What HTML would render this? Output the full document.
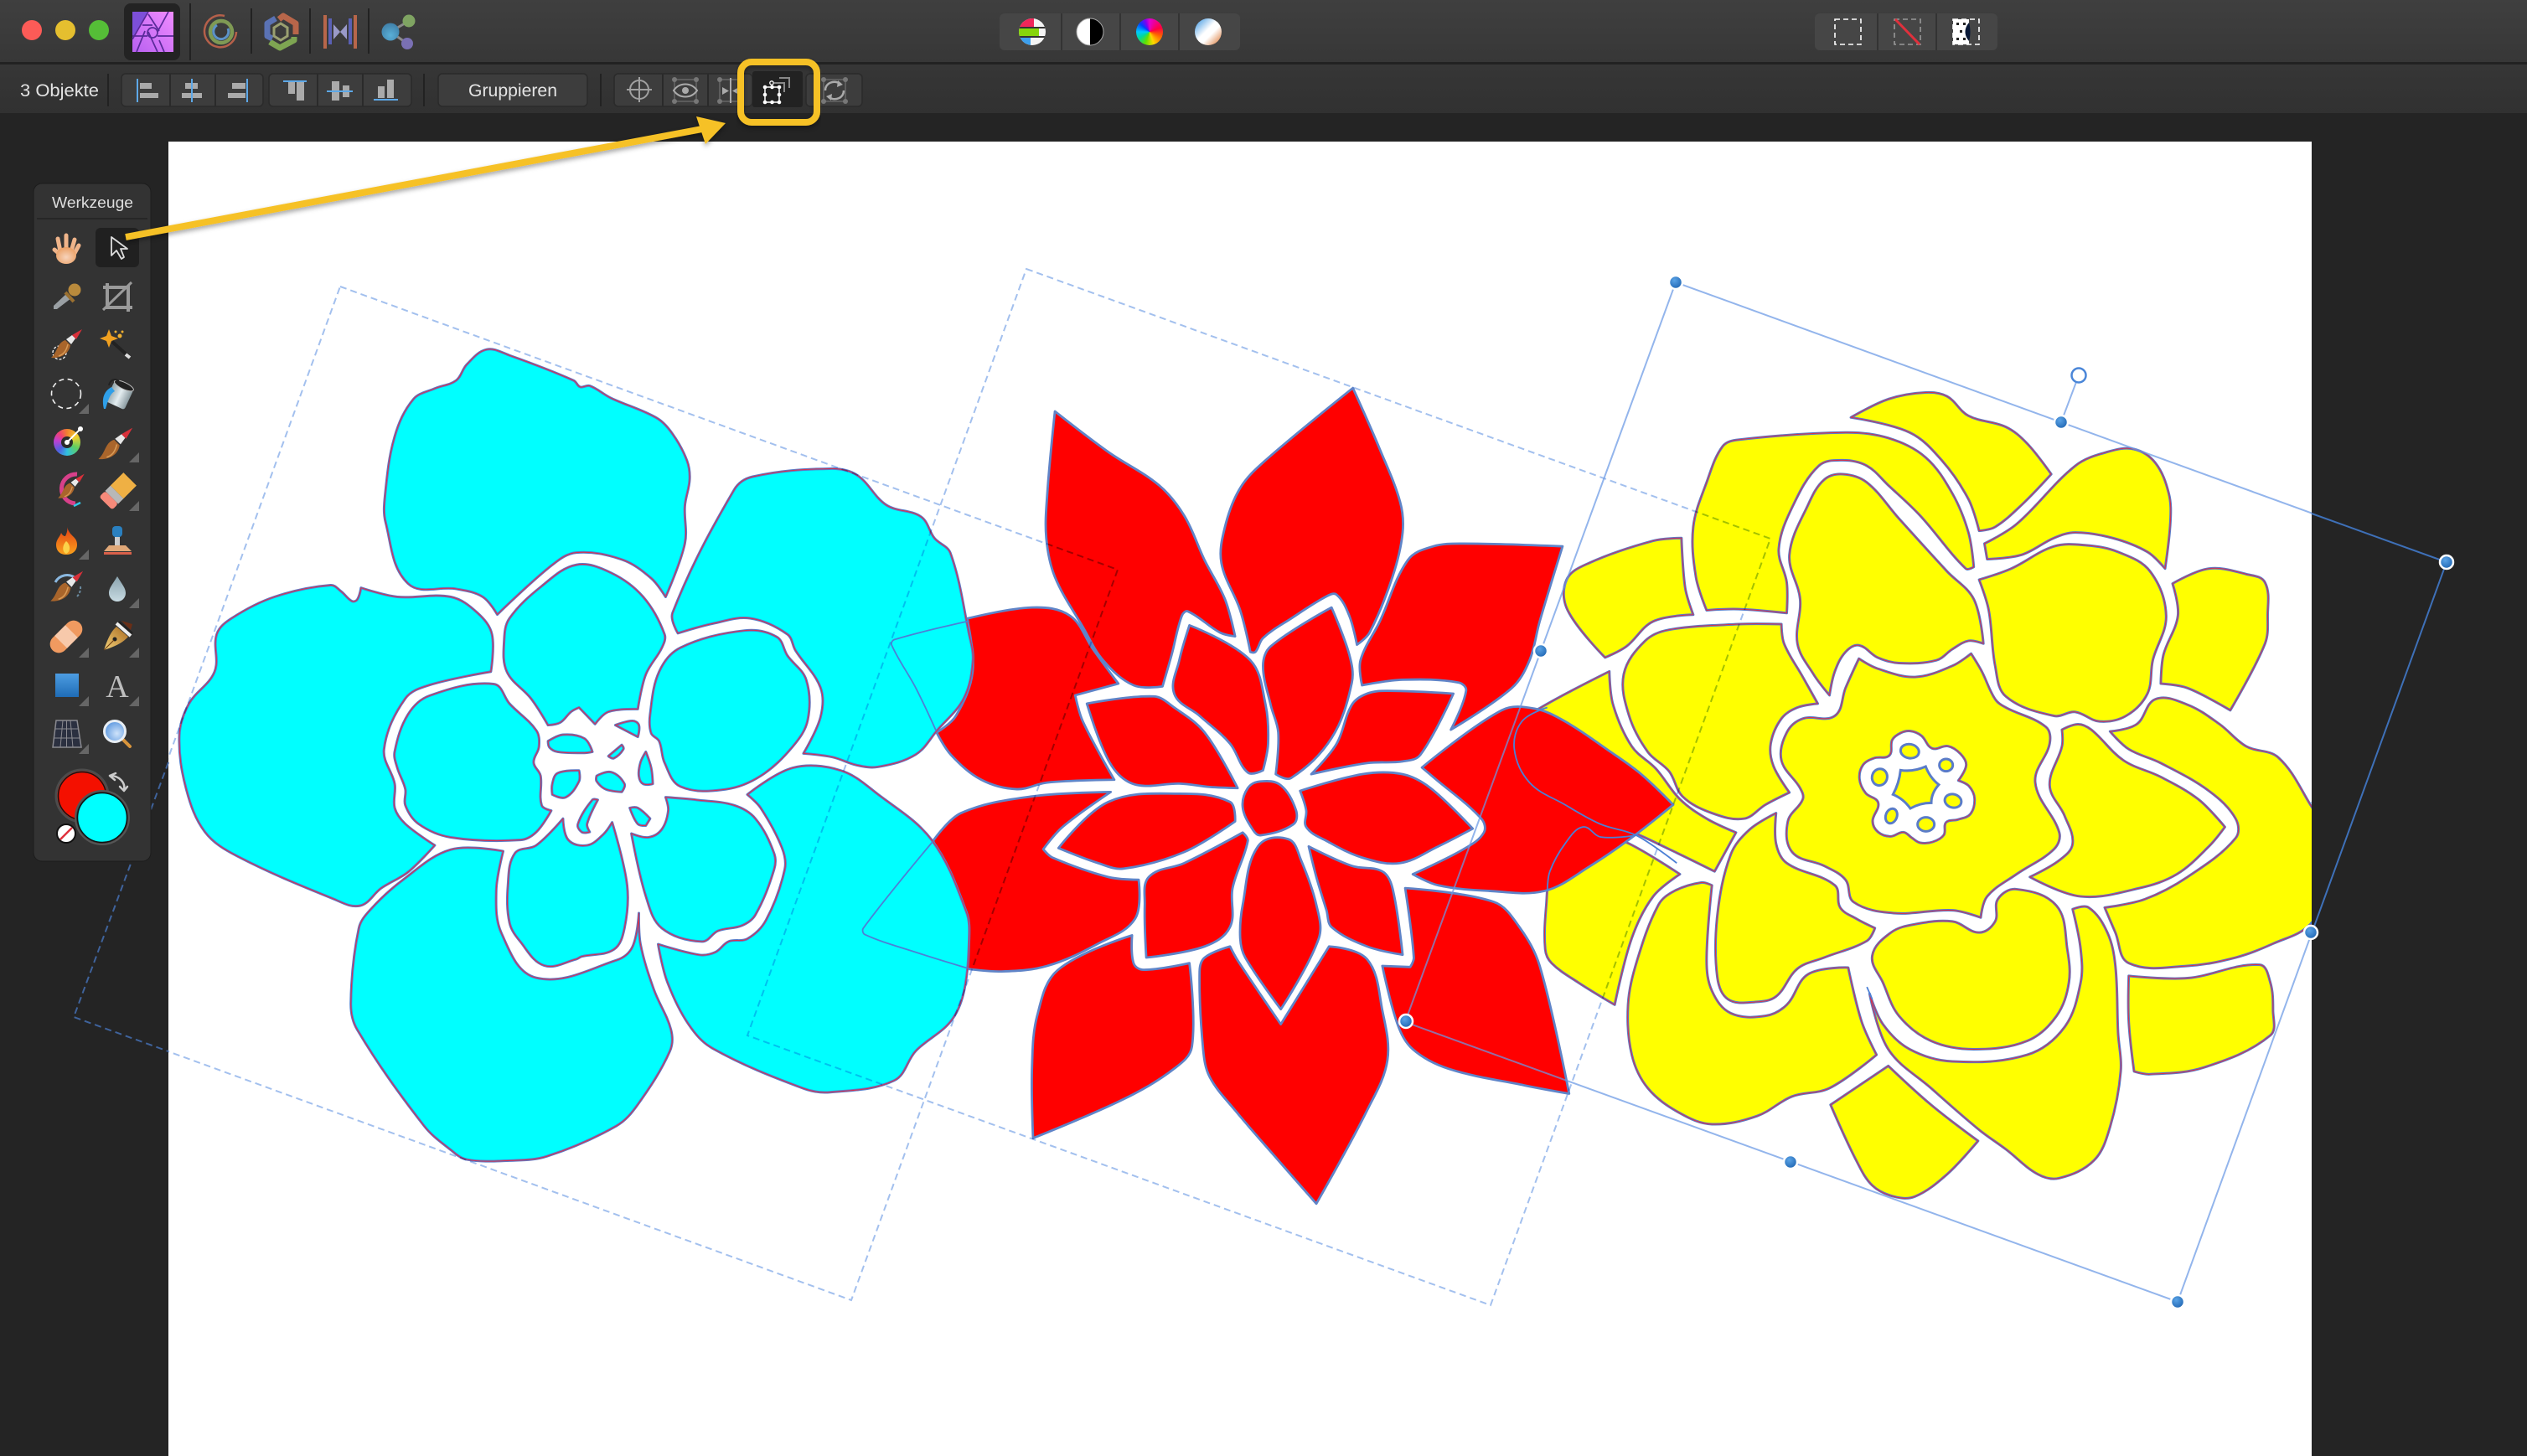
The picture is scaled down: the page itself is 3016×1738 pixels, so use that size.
<!DOCTYPE html>
<html><head><meta charset="utf-8"><style>
html,body{margin:0;padding:0;background:#242424;width:3016px;height:1738px;overflow:hidden}
svg{display:block;position:absolute;left:0;top:0}
text{font-family:"Liberation Sans",sans-serif}
path.s{vector-effect:non-scaling-stroke;stroke-linejoin:round}
.sn{vector-effect:non-scaling-stroke}
</style></head><body>
<svg xmlns="http://www.w3.org/2000/svg" width="3016" height="1738" viewBox="0 0 3016 1738">
<defs>
<linearGradient id="tb" x1="0" y1="0" x2="0" y2="1"><stop offset="0" stop-color="#3f3f3f"/><stop offset="1" stop-color="#373737"/></linearGradient>
<linearGradient id="ob" x1="0" y1="0" x2="0" y2="1"><stop offset="0" stop-color="#363636"/><stop offset="1" stop-color="#313131"/></linearGradient>
<linearGradient id="af" x1="0" y1="1" x2="1" y2="0"><stop offset="0" stop-color="#b860f0"/><stop offset="1" stop-color="#f08cff"/></linearGradient>
<linearGradient id="sq" x1="0" y1="0" x2="0" y2="1"><stop offset="0" stop-color="#4d9de2"/><stop offset="1" stop-color="#1f6cb6"/></linearGradient>
<linearGradient id="gr4" x1="0" y1="0" x2="1" y2="1"><stop offset="0" stop-color="#2f8fe0"/><stop offset=".45" stop-color="#fff"/><stop offset=".6" stop-color="#fff"/><stop offset="1" stop-color="#d9702a"/></linearGradient>
<linearGradient id="sil" x1="0" y1="0" x2="1" y2="0"><stop offset="0" stop-color="#8fa3aa"/><stop offset=".5" stop-color="#e4edf0"/><stop offset="1" stop-color="#8a9aa0"/></linearGradient>
<linearGradient id="drop" x1="0" y1="0" x2="0" y2="1"><stop offset="0" stop-color="#8aa3ae"/><stop offset="1" stop-color="#c8dbe2"/></linearGradient>
<linearGradient id="nib" x1="0" y1="1" x2="1" y2="0"><stop offset="0" stop-color="#f3d27a"/><stop offset="1" stop-color="#a8691f"/></linearGradient>
<linearGradient id="fl" x1="0" y1="0" x2="0" y2="1"><stop offset="0" stop-color="#e23c14"/><stop offset="1" stop-color="#f9a21c"/></linearGradient>
<radialGradient id="hd" cx=".5" cy=".6" r=".6"><stop offset="0" stop-color="#f7d3bb"/><stop offset="1" stop-color="#ea9f63"/></radialGradient>
<radialGradient id="hn" cx=".4" cy=".35" r=".7"><stop offset="0" stop-color="#5aa3e6"/><stop offset="1" stop-color="#1d63b0"/></radialGradient>
<radialGradient id="lens" cx=".6" cy=".6" r=".7"><stop offset="0" stop-color="#cfe3fa"/><stop offset="1" stop-color="#4f8fdc"/></radialGradient>
<radialGradient id="blu" cx=".5" cy=".7" r=".7"><stop offset="0" stop-color="#5ab0d8"/><stop offset="1" stop-color="#3f7fa8"/></radialGradient>
<filter id="sh" x="-5%" y="-30%" width="110%" height="170%"><feDropShadow dx="0" dy="3" stdDeviation="3" flood-color="#000" flood-opacity=".35"/></filter>
<clipPath id="page"><rect x="201" y="169" width="2558" height="1569"/></clipPath>
<clipPath id="c1"><circle cx="1232" cy="38" r="16"/></clipPath>
<g id="brush">
<path d="M-15,10 C-6,11 6,7 8,-5 L2,-11 C-8,-8 -7,3 -15,10Z" fill="#a9652b"/>
<path d="M-6,8 C0,6 3,2 5,-6" stroke="#d89a56" stroke-width="1.5" fill="none"/>
<path d="M3,-12 L10,-17 L14,-13 L9,-6Z" fill="#e8e8e8"/>
<path d="M10,-17 L22,-24 L15,-12Z" fill="#d9303a"/>
</g>
<g id="cyp">
<path class="s" d="M597,27 640,38 760,85 772,97 790,95 830,118 915,155 945,185 972,235 977,270 968,320 968,390 932,490 905,455 850,420 765,407 720,430 617,523 590,490 540,475 450,465 408,350 407,300 425,190 460,120 500,100 540,85 560,55Z"/>
<path class="s" d="M945,520 1060,290 1095,265 1240,250 1290,262 1345,318 1410,340 1435,380 1465,408 1500,560 1507,610 1490,680 1440,740 1400,785 1330,808 1290,805 1245,790 1190,783 1222,715 1222,660 1175,590 1160,560 1090,530 1020,540 955,558Z"/>
<path class="s" d="M1085,860 1170,810 1260,815 1330,860 1430,945 1495,1080 1500,1130 1490,1230 1465,1285 1400,1340 1360,1395 1240,1417 1190,1410 1020,1335 975,1290 935,1210 918,1140 995,1160 1025,1155 1050,1135 1085,1130 1120,1095 1155,1000 1150,960 1110,885Z"/>
<path class="s" d="M530,963 628,966 615,1040 625,1120 690,1203 840,1170 870,1145 882,1082 885,1140 910,1225 942,1300 940,1340 880,1440 840,1480 710,1537 640,1545 560,1543 530,1525 480,1480 355,1300 343,1250 358,1110 380,1075 440,1020Z"/>
<path class="s" d="M305,468 325,480 345,498 355,495 362,473 430,490 530,490 580,520 607,560 605,630 490,655 445,680 405,775 425,840 425,885 445,915 500,955 450,1005 400,1035 360,1068 310,1055 130,975 70,930 35,850 22,750 40,690 88,630 92,560 120,530 200,490Z"/>
<path class="s" d="M765,430 830,445 890,490 930,560 925,585 895,635 880,700 825,705 800,728 770,697 755,705 735,725 712,730 680,680 635,630 630,570 640,530 700,470Z"/>
<path class="s" d="M1080,553 1140,565 1160,600 1195,645 1198,720 1170,770 1110,825 1045,850 960,845 930,800 920,760 905,745 903,710 920,630 960,585Z"/>
<path class="s" d="M610,653 640,690 690,740 695,770 685,800 698,825 700,880 718,890 690,930 660,945 530,940 470,915 445,880 445,850 430,810 425,780 450,710 490,675Z"/>
<path class="s" d="M650,970 690,955 740,905 750,945 785,955 815,935 832,912 860,1030 855,1110 835,1150 775,1163 765,1168 705,1180 660,1135 640,1100 637,1030Z"/>
<path class="s" d="M868,933 900,940 925,925 937,890 932,865 990,870 1060,880 1100,905 1135,970 1135,1000 1100,1085 1075,1105 1030,1115 1000,1135 925,1110 895,1050Z"/>
<path class="s" d="M712,760 740,748 780,755 795,780 780,782 730,780 715,772Z"/>
<path class="s" d="M838,730 870,722 882,730 880,752Z"/>
<path class="s" d="M825,788 850,767 853,775 835,792Z"/>
<path class="s" d="M885,800 895,780 905,810 908,840 890,840 882,825Z"/>
<path class="s" d="M803,825 830,818 855,840 850,855 820,850 803,835Z"/>
<path class="s" d="M730,820 770,815 770,835 745,865 720,860 720,840Z"/>
<path class="s" d="M865,885 880,885 903,905 895,918 880,915Z"/>
<path class="s" d="M795,870 805,870 785,915 790,930 775,930 768,915Z"/>
</g>
<g id="yep">
<path class="s" d="M610,103 680,70 750,58 790,65 830,100 900,120 940,150 985,205 930,260 880,300 850,307 830,250 780,180 720,130Z"/>
<path class="s" d="M860,330 920,295 1030,190 1090,165 1140,160 1180,185 1205,240 1208,290 1198,375 1165,345 1100,320 1030,310 990,320 930,350 865,358Z"/>
<path class="s" d="M370,155 400,143 600,130 680,140 750,175 800,240 830,310 840,372 825,375 740,280 680,225 640,190 595,180 550,190 500,265 475,340 490,400 490,455 400,448 340,450 320,390 315,300 340,220Z"/>
<path class="s" d="M293,320 240,325 120,365 78,395 80,450 150,535 190,515 240,470 315,458 300,410Z"/>
<path class="s" d="M595,205 640,220 700,285 790,380 840,430 858,510 830,505 800,520 770,540 700,545 660,535 625,513 600,525 580,560 570,603 540,565 510,510 515,430 495,350 530,260 560,215Z"/>
<path class="s" d="M850,395 910,375 990,335 1050,333 1110,345 1170,380 1200,460 1175,540 1165,600 1125,640 1075,650 1030,633 990,640 900,605 880,550 868,450Z"/>
<path class="s" d="M1212,402 1280,375 1350,385 1385,400 1390,460 1385,510 1320,630 1240,590 1190,582 1195,530 1222,460Z"/>
<path class="s" d="M480,475 400,475 270,485 225,505 185,565 195,640 230,705 270,740 295,785 350,815 410,825 450,800 495,778 465,730 460,690 480,645 510,625 548,618 520,570 485,510Z"/>
<path class="s" d="M625,537 660,555 730,570 800,550 835,528 855,560 880,610 900,625 975,660 982,690 955,760 1000,850 990,880 920,925 865,965 853,1003 800,990 690,995 615,975 600,935 560,910 500,885 492,830 520,790 515,770 480,720 490,670 520,645 580,640 600,590Z"/>
<path class="s" d="M1035,655 1060,665 1120,720 1190,750 1260,790 1310,840 1280,875 1220,925 1150,950 1040,965 945,930 1000,900 1025,870 1010,820 982,765 1005,695 1005,665Z"/>
<path class="s" d="M470,815 470,870 490,905 580,945 590,985 620,1005 655,1022 640,1045 560,1075 510,1095 470,1145 430,1155 380,1150 360,1110 360,1000 385,890 420,845Z"/>
<path class="s" d="M920,952 995,982 1015,1060 1018,1120 995,1180 940,1225 840,1240 760,1225 700,1180 670,1120 650,1072 685,1030 730,1015 800,1010 850,1030 880,1010 885,970Z"/>
<path class="s" d="M1025,988 1055,985 1090,1030 1105,1090 1110,1210 1115,1280 1095,1380 1065,1440 1000,1472 960,1465 900,1420 850,1385 760,1310 680,1240 645,1140 670,1195 720,1240 800,1262 940,1250 1010,1200 1040,1120 1040,1060Z"/>
<path class="s" d="M330,940 350,945 340,1080 350,1135 385,1175 450,1180 490,1160 530,1105 605,1093 630,1190 658,1250 570,1310 500,1325 435,1360 350,1375 290,1355 230,1310 200,1250 193,1160 210,1080 250,980 280,955Z"/>
<path class="s" d="M158,560 30,625 -20,660 -20,780 100,820 190,845 270,880 355,920 395,850 340,825 290,790 245,735 200,695 165,620Z"/>
<path class="s" d="M110,840 195,870 290,925 240,965 200,1040 168,1160 100,1120 50,1085 38,1060 40,980 50,920Z"/>
<path class="s" d="M1095,668 1145,655 1180,610 1240,620 1300,655 1350,695 1410,715 1470,800 1515,880 1500,950 1470,1015 1400,1050 1330,1075 1240,1090 1130,1085 1105,1030 1085,985 1160,970 1240,930 1330,860 1330,825 1280,775 1190,725 1130,700Z"/>
<path class="s" d="M1130,1108 1240,1112 1375,1088 1395,1120 1400,1170 1395,1215 1270,1273 1170,1285 1140,1280 1130,1190Z"/>
<path class="s" d="M680,1270 760,1340 848,1405 790,1465 730,1505 690,1505 650,1485 620,1440 572,1340Z"/>
</g>
</defs>

<!-- document & pasteboard -->
<rect width="3016" height="1738" fill="#242424"/>
<rect x="201" y="169" width="2558" height="1569" fill="#fff"/>

<g clip-path="url(#page)">
<!-- yellow -->
<use href="#yep" transform="translate(1820,430) scale(.63776,.66327)" fill="#ff0" stroke="#5a7cc8" stroke-width="3"/>
<use href="#yep" transform="translate(1820,430) scale(.63776,.66327)" fill="none" stroke="#d8304a" stroke-width="1"/>
<!-- yellow centre ring -->
<g transform="translate(2200,850) scale(.33333)" stroke="#5a7cc8" stroke-width="3">
<path class="s" fill="#fff" d="M165,155 175,100 205,75 240,68 280,85 318,130 375,122 420,150 440,190 412,245 450,265 470,310 455,365 410,385 368,395 360,440 320,465 275,468 245,450 215,430 170,445 125,430 105,390 125,325 80,290 58,240 70,190 110,165Z"/>
<path class="s" fill="none" stroke="#d8304a" stroke-width="1" d="M165,155 175,100 205,75 240,68 280,85 318,130 375,122 420,150 440,190 412,245 450,265 470,310 455,365 410,385 368,395 360,440 320,465 275,468 245,450 215,430 170,445 125,430 105,390 125,325 80,290 58,240 70,190 110,165Z"/>
<path class="sn" fill="#ff0" d="M205,208 Q250,215 295,195 Q310,235 342,260 Q315,290 315,325 Q275,325 240,345 Q215,310 178,295 Q200,255 205,208Z"/>
<ellipse class="sn" cx="238" cy="140" rx="33" ry="25" fill="#ff0" transform="rotate(10 238 140)"/>
<ellipse class="sn" cx="368" cy="190" rx="24" ry="22" fill="#ff0"/>
<ellipse class="sn" cx="393" cy="318" rx="30" ry="24" fill="#ff0" transform="rotate(15 393 318)"/>
<ellipse class="sn" cx="296" cy="402" rx="30" ry="25" fill="#ff0"/>
<ellipse class="sn" cx="172" cy="372" rx="20" ry="27" fill="#ff0" transform="rotate(20 172 372)"/>
<ellipse class="sn" cx="130" cy="233" rx="27" ry="30" fill="#ff0" transform="rotate(15 130 233)"/>
</g>
<!-- red -->
<g transform="translate(1050,430) scale(.60588,.66327)" fill="#f00" stroke="#5f84c8" stroke-width="2.8">
<path class="s" d="M345,92 450,165 550,225 600,280 640,360 680,430 700,497 670,490 607,452 595,460 575,530 557,587 500,585 440,540 400,480 345,390 328,320 330,240Z"/>
<path class="s" d="M932,50 985,160 1025,255 1030,310 1010,390 965,490 940,512 925,460 900,422 880,425 810,465 755,500 740,525 730,525 710,450 673,365 680,300 710,230 760,180Z"/>
<path class="s" d="M1345,335 1300,470 1280,540 1245,590 1125,665 1155,595 1140,580 1030,575 950,585 947,540 985,470 1040,360 1090,335 1150,330Z"/>
<path class="s" d="M1068,733 1225,630 1290,627 1350,650 1440,705 1500,745 1563,800 1480,860 1400,910 1310,955 1200,955 1100,945 1050,925 1150,880 1190,850 1185,825 1090,750Z"/>
<path class="s" d="M1035,950 1210,975 1260,1020 1300,1090 1358,1320 1270,1305 1120,1275 1050,1240 1020,1195 990,1090 1045,1092 1052,1075Z"/>
<path class="s" d="M690,1055 705,1080 790,1195 885,1055 960,1078 990,1170 1000,1260 960,1350 860,1518 790,1445 700,1350 650,1290 637,1240 630,1100 640,1075Z"/>
<path class="s" d="M497,1035 500,1085 520,1097 610,1085 615,1235 580,1275 480,1330 302,1400 300,1270 310,1180 350,1098Z"/>
<path class="s" d="M455,777 360,840 322,880 340,895 450,930 510,935 503,1005 430,1050 330,1090 240,1100 170,1095 175,1010 165,985 105,865 160,815 300,785Z"/>
<path class="s" d="M300,445 375,460 420,520 470,582 385,603 400,650 462,755 330,760 270,772 200,755 140,710 112,670 150,640 183,560 172,465Z"/>
<path class="s" d="M610,477 730,540 760,620 765,690 755,738 725,742 690,690 630,640 580,600 590,540Z"/>
<path class="s" d="M890,445 925,530 930,580 890,680 810,752 780,745 785,670 770,620 755,550 770,515Z"/>
<path class="s" d="M1130,600 1065,710 1030,722 960,725 850,745 900,690 930,620 960,600 1000,595Z"/>
<path class="s" d="M828,775 950,745 1030,745 1085,770 1168,843 1100,875 1025,905 950,895 880,865 840,840 840,810Z"/>
<path class="s" d="M845,875 930,910 990,920 1010,950 1030,1070 960,1055 890,1020 880,990 860,930Z"/>
<path class="s" d="M805,862 830,900 860,980 865,1040 790,1168 720,1075 710,1040 715,980 745,875Z"/>
<path class="s" d="M715,850 725,865 695,950 690,1020 640,1055 525,1075 522,980 530,930 600,905Z"/>
<path class="s" d="M690,795 700,830 600,885 480,915 430,905 352,878 450,795 590,780Z"/>
<path class="s" d="M408,618 540,605 580,625 640,670 705,770 650,768 590,762 510,765 470,745 440,700Z"/>
<path class="s" d="M750,758 790,765 820,810 815,835 750,855 735,845 715,805 725,770Z"/>
</g>
<!-- cyan -->
<use href="#cyp" transform="translate(200,400) scale(.63776)" fill="#0ff" stroke="#5a7cc8" stroke-width="3"/>
<use href="#cyp" transform="translate(200,400) scale(.63776)" fill="none" stroke="#d8304a" stroke-width="1"/>
<!-- mask outlines -->
<g fill="none" stroke="#4c80d6" stroke-width="1.8">
<g transform="translate(200,400) scale(.63776)">
<path class="s" d="M1500,535 1360,570 1355,580 1400,660 1438,740"/>
<path class="s" d="M1432,948 1302,1110 1305,1122 1400,1155 1497,1185"/>
</g>
<g transform="translate(1050,430) scale(.60588,.66327)">
<path class="s" d="M1315,625 1265,650 1250,700 1280,760 1350,800 1420,835 1490,855 1570,905"/>
<path class="s" d="M1315,955 1320,920 1350,870 1385,840 1420,858 1490,855"/>
</g>
<g transform="translate(1820,430) scale(.63776,.66327)">
<path class="s" d="M1472,795 1510,850 1513,900 1490,980 1470,1015"/>
<path class="s" d="M640,1128 650,1150"/>
</g>
</g>
<!-- dashed boxes inside page -->
<g fill="none" stroke="#a3c0ee" stroke-width="2" stroke-dasharray="8 5" style="mix-blend-mode:multiply">
<path d="M406,342 1334,680 1016,1552 88,1214Z"/>
<path d="M1225,321 2113,643 1779,1558 892,1236Z"/>
</g>
<!-- solid selection inside page -->
<g fill="none" stroke="#6a98e4" stroke-opacity=".72" stroke-width="2">
<path d="M2920,671 2000,337 1677,1220 2599,1554 2920,671"/>
<path d="M2460,504 2481,448"/>
</g>
</g>

<!-- lines over pasteboard -->
<path d="M201,910 88,1214 201,1255" fill="none" stroke="#3f639c" stroke-width="2" stroke-dasharray="8 5"/>
<path d="M2759,613 2920,671 2759,1114" fill="none" stroke="#3e70b8" stroke-width="2"/>
<g fill="url(#hn)" stroke="#fff" stroke-width="2.5">
<circle cx="2000" cy="337" r="8"/><circle cx="2920" cy="671" r="8"/><circle cx="2599" cy="1554" r="8"/><circle cx="1678" cy="1219" r="8"/>
<circle cx="1839" cy="777" r="8"/><circle cx="2460" cy="504" r="8"/><circle cx="2758" cy="1113" r="8"/><circle cx="2137" cy="1387" r="8"/>
</g>
<circle cx="2481" cy="448" r="8.5" fill="#fff" stroke="#4a86d8" stroke-width="2.5"/>

<!-- top bar -->
<rect width="3016" height="75" fill="url(#tb)"/>
<rect y="74" width="3016" height="3" fill="#222"/>
<rect y="77" width="3016" height="58" fill="url(#ob)"/>
<circle cx="38" cy="36" r="12" fill="#fc5b57"/><circle cx="78" cy="36" r="12" fill="#e5bf2f"/><circle cx="118" cy="36" r="12" fill="#55be37"/>
<rect x="148" y="4" width="67" height="68" rx="8" fill="#232323"/>
<!-- Affinity logo -->
<rect x="158" y="14" width="49" height="48" fill="url(#af)"/>
<path d="M158,14H177L158,47Z" fill="#7d4fd8"/>
<g stroke="#5a2a9a" stroke-width="1.7" fill="none">
<path d="M177,14 158,47M177,17 190,37M170,30H182M201,14 188,38M188,43H207M177,38 188,62M173,37 163,62"/>
<circle cx="182" cy="39" r="6"/>
<path d="M190,48 196,62M176,43 158,43"/>
</g>
<g stroke="#222" stroke-width="2"><path d="M227,4V72M300,10V64M370,10V64M440,10V64"/></g>
<!-- persona icons -->
<g fill="none">
<path d="M268,19A19,19 0 1 0 282,38" stroke="#b5604a" stroke-width="2.5"/>
<circle cx="264" cy="38" r="13" stroke="#7f9a54" stroke-width="4.5"/>
<path d="M259,30A9,9 0 1 0 272,34" stroke="#5c92c8" stroke-width="3"/>
<path d="M333,23 338,19 353,28V41" stroke="#b8664a" stroke-width="7" stroke-linejoin="round"/>
<path d="M351,44V48L334,57 322,50" stroke="#7ea552" stroke-width="7" stroke-linejoin="round"/>
<path d="M325,46 319,43V28L329,22" stroke="#5a72b4" stroke-width="7" stroke-linejoin="round"/>
<path d="M327,33 335,28 343,33V43L335,48 327,43Z" stroke="#9aa070" stroke-width="3"/>
<path d="M388,18V58M424,18V58" stroke="#b8664a" stroke-width="4"/>
<path d="M394,22V53M418,22V53" stroke="#5a60b4" stroke-width="4"/>
</g>
<path d="M398,29 406,38 398,47ZM414,29 406,38 414,47Z" fill="#9a9ac8"/>
<path d="M466,38 488,25M466,38 486,52" stroke="#8a8a8a" stroke-width="3"/>
<circle cx="466" cy="38" r="10.500" fill="url(#blu)"/><circle cx="488" cy="25" r="7.500" fill="#7fa462"/><circle cx="486" cy="52" r="7" fill="#7a70b4"/>

<!-- center toolbar group -->
<rect x="1193" y="16" width="287" height="44" rx="6" fill="#464646"/>
<path d="M1267,16V60M1337,16V60M1407,16V60" stroke="#333" stroke-width="2"/>
<g clip-path="url(#c1)">
<rect x="1216" y="22" width="32" height="32" fill="#f4f4f4"/>
<rect x="1216" y="22" width="18" height="10" fill="#f0265a"/>
<rect x="1216" y="34" width="24" height="9" fill="#86d50b"/>
<rect x="1216" y="44" width="14" height="10" fill="#3da0ee"/>
<rect x="1216" y="32" width="32" height="2" fill="#333"/><rect x="1216" y="43" width="32" height="2" fill="#333"/>
</g>
<circle cx="1301" cy="38" r="16" fill="#fff"/><path d="M1301,22A16,16 0 0 1 1301,54Z" fill="#000"/><circle cx="1301" cy="38" r="16" fill="none" stroke="#aaa" stroke-width="1"/>
<foreignObject x="1356" y="22" width="32" height="32"><div xmlns="http://www.w3.org/1999/xhtml" style="width:32px;height:32px;border-radius:50%;background:conic-gradient(#e000d0,#ff0040 70deg,#ff6000 110deg,#ffd800 160deg,#60e000 200deg,#00d8a0 240deg,#00c8ff 270deg,#0040ff 310deg,#8000f0 340deg,#e000d0)"></div></foreignObject>
<circle cx="1442" cy="38" r="16" fill="url(#gr4)"/>
<!-- right toolbar group -->
<rect x="2166" y="16" width="218" height="44" rx="6" fill="#464646"/>
<path d="M2241,16V60M2311,16V60" stroke="#333" stroke-width="2"/>
<rect x="2190" y="23" width="31" height="30" fill="none" stroke="#fff" stroke-width="1.6" stroke-dasharray="6 4"/>
<rect x="2261" y="23" width="31" height="30" fill="none" stroke="#999" stroke-width="1.6" stroke-dasharray="6 4"/>
<path d="M2262,23 2291,53" stroke="#e0303c" stroke-width="3"/>
<rect x="2331" y="23" width="31" height="30" fill="none" stroke="#fff" stroke-width="1.6" stroke-dasharray="6 4"/>
<rect x="2331" y="23" width="19" height="30" fill="#fff"/>
<path d="M2350,27C2344,34 2344,42 2350,49C2352,42 2352,34 2350,27Z" fill="#0a1a38"/>
<path d="M2335,27h3v3h-3zM2343,27h3v3h-3zM2335,45h3v3h-3zM2343,45h3v3h-3zM2339,36h3v3h-3z" fill="#222"/>

<!-- option bar -->
<text x="24" y="115" font-size="21" fill="#e4e4e4" textLength="94" lengthAdjust="spacingAndGlyphs">3 Objekte</text>
<path d="M129,88V127M506,88V127M717,88V127" stroke="#222" stroke-width="2"/>
<g fill="#3d3d3d" stroke="#2a2a2a" stroke-width="1.5">
<rect x="145" y="88" width="169" height="39" rx="5"/>
<rect x="321" y="88" width="170" height="39" rx="5"/>
<rect x="523" y="88" width="178" height="39" rx="5"/>
<rect x="733" y="88" width="165" height="39" rx="5"/>
<rect x="962" y="88" width="67" height="39" rx="5"/>
</g>
<path d="M203,88V127M257,88V127M379,88V127M433,88V127M791,88V127M845,88V127" stroke="#2a2a2a" stroke-width="2"/>
<g fill="#aaa">
<rect x="167" y="99" width="14" height="7"/><rect x="167" y="111" width="22" height="6"/>
<rect x="221" y="99" width="15" height="7"/><rect x="217" y="111" width="24" height="6"/>
<rect x="277" y="99" width="16" height="7"/><rect x="272" y="111" width="21" height="6"/>
<rect x="344" y="98" width="8" height="14"/><rect x="354" y="98" width="9" height="22"/>
<rect x="396" y="97" width="9" height="23"/><rect x="409" y="102" width="8" height="14"/>
<rect x="451" y="103" width="8" height="14"/><rect x="462" y="95" width="8" height="22"/>
</g>
<g stroke="#5da8e8" stroke-width="2">
<path d="M164,94V122M229,94V122M295,94V122M338,97H366M390,109H421M446,119H475"/>
</g>
<text x="559" y="115" font-size="21" fill="#e4e4e4" textLength="106" lengthAdjust="spacingAndGlyphs">Gruppieren</text>
<!-- snapping-ish icons -->
<g fill="none" stroke="#a0a0a0" stroke-width="2">
<circle cx="763" cy="107" r="11"/><path d="M763,92V122M748,107H778"/>
<rect x="805" y="95" width="26" height="26" stroke="#666" stroke-width="1.5"/>
<path d="M804,108C811,98 825,98 832,108C825,118 811,118 804,108Z" stroke="#aaa"/>
<circle cx="818" cy="108" r="4" fill="#aaa" stroke="none"/>
<path d="M859,95H880M859,121H880M859,95V121" stroke="#666" stroke-width="1.5"/>
<path d="M872,93V123" stroke="#aaa"/>
<path d="M862,104 870,108.500 862,113ZM882,104 874,108.500 882,113Z" fill="#aaa" stroke="none"/>
<rect x="983" y="95" width="26" height="26" stroke="#666" stroke-width="1.5"/>
<path d="M985,108C985,99 995,95 1003,100M1007,108C1007,117 997,121 989,116" stroke="#aaa" stroke-width="2.5"/>
<path d="M1000,96 1006,101 999,104ZM992,120 986,115 993,112Z" fill="#aaa" stroke="none"/>
</g>
<g fill="#777">
<circle cx="805" cy="95" r="3"/><circle cx="831" cy="95" r="3"/><circle cx="805" cy="121" r="3"/><circle cx="831" cy="121" r="3"/>
<circle cx="859" cy="95" r="3"/><circle cx="859" cy="121" r="3"/>
<circle cx="983" cy="95" r="3"/><circle cx="1009" cy="95" r="3"/><circle cx="983" cy="121" r="3"/><circle cx="1009" cy="121" r="3"/>
</g>
<rect x="898" y="85" width="60" height="43" rx="3" fill="#222"/>
<path d="M930,93H942V105M924,99H936V110" fill="none" stroke="#888" stroke-width="2"/>
<rect x="913" y="104" width="17" height="18" fill="none" stroke="#fff" stroke-width="1.5"/>
<g fill="#fff"><circle cx="913" cy="104" r="2.3"/><circle cx="930" cy="104" r="2.3"/><circle cx="913" cy="122" r="2.3"/><circle cx="930" cy="122" r="2.3"/><circle cx="921.500" cy="104" r="2.3"/><circle cx="921.500" cy="122" r="2.3"/><circle cx="913" cy="113" r="2.3"/><circle cx="930" cy="113" r="2.3"/></g>
<circle cx="921" cy="99" r="2.2" fill="none" stroke="#fff" stroke-width="1.3"/>

<!-- yellow callout -->
<rect x="884" y="74" width="91" height="72" rx="13" fill="none" stroke="#f6c125" stroke-width="8" filter="url(#sh)"/>

<!-- tools panel -->
<rect x="40" y="219" width="140" height="809" rx="10" fill="#333" stroke="#1c1c1c" stroke-width="1"/>
<text x="62" y="248" font-size="18" fill="#dedede" textLength="97" lengthAdjust="spacingAndGlyphs">Werkzeuge</text>
<rect x="44" y="260" width="132" height="2" fill="#262626"/>
<rect x="114" y="272" width="52" height="47" rx="6" fill="#202020"/>
<!-- hand -->
<g stroke="#efb48a" stroke-width="5" stroke-linecap="round"><path d="M72,304 65,298M72,300 69,285M79,300V281M85,300 89,286M88,304 94,293"/></g>
<ellipse cx="79" cy="305" rx="12" ry="10" fill="url(#hd)"/>
<!-- cursor -->
<path d="M133,283V305L139,299 145,309 148,307 144,297 152,297Z" fill="#222" stroke="#ddd" stroke-width="1.8" stroke-linejoin="round"/>
<!-- pipette -->
<path d="M80,350 85,356 68,369 64,369 64,365Z" fill="#9aa0a4"/>
<path d="M78,349 88,360" stroke="#9a7030" stroke-width="4"/>
<circle cx="89" cy="346" r="7.500" fill="#b98a3c"/>
<!-- crop -->
<g stroke="#9a9a9a" stroke-width="4" fill="none"><rect x="128" y="343" width="25" height="24"/><path d="M123,343H128M153,367H158M128,338V343M153,367V372"/></g><path d="M123,370 157,337" stroke="#9a9a9a" stroke-width="3"/>
<!-- brush sel -->
<circle cx="71" cy="421" r="8" fill="none" stroke="#fff" stroke-width="1.3" stroke-dasharray="3 2"/>
<use href="#brush" transform="translate(76,417)"/>
<!-- wand -->
<path d="M134,408 154,426" stroke="#222" stroke-width="4"/><path d="M150,423 155,427" stroke="#ddd" stroke-width="4"/>
<path d="M130,393 133,401 141,404 133,407 130,415 127,407 119,404 127,401Z" fill="#f0a020"/>
<circle cx="143" cy="401" r="2.5" fill="#f0b030"/><circle cx="146" cy="396" r="1.5" fill="#f0b030"/><circle cx="138" cy="396" r="1.5" fill="#f0b030"/>
<!-- dashed circle -->
<circle cx="79" cy="470" r="17.5" fill="none" stroke="#f0f0f0" stroke-width="1.6" stroke-dasharray="6 4.5"/>
<!-- bucket -->
<g transform="rotate(25 142 472)"><rect x="130" y="459" width="25" height="26" rx="3" fill="url(#sil)"/><ellipse cx="142.500" cy="459" rx="12.500" ry="4" fill="#222" stroke="#bbb"/></g>
<path d="M130,460C132,452 138,452 142,455" fill="none" stroke="#222" stroke-width="2"/>
<path d="M124,488C121,476 124,467 133,462L137,467C131,470 129,478 126,488Z" fill="#2f9fe8"/>
<!-- colour wheel -->
<foreignObject x="64" y="512" width="32" height="32"><div xmlns="http://www.w3.org/1999/xhtml" style="width:32px;height:32px;border-radius:50%;background:conic-gradient(#f08030,#f0d030 60deg,#60d060 120deg,#30c0e0 180deg,#5060e0 225deg,#c040d0 280deg,#f04070 320deg,#f08030)"></div></foreignObject>
<circle cx="80" cy="528" r="7" fill="#2b2b2b"/>
<path d="M80,528 96,512" stroke="#fff" stroke-width="2"/><circle cx="80" cy="528" r="3" fill="#fff"/><circle cx="96" cy="512" r="3" fill="#fff"/>
<!-- brush -->
<use href="#brush" transform="translate(134,537) scale(1.1)"/>
<!-- mix brush -->
<path d="M92,566A17,17 0 1 0 90,601" fill="none" stroke="#d8408a" stroke-width="5"/>
<path d="M88,604 96,600" stroke="#30c8e8" stroke-width="2.5"/>
<use href="#brush" transform="translate(82,586) scale(.85)"/>
<!-- eraser -->
<g transform="rotate(45 141 586)"><rect x="130" y="566" width="22" height="22" fill="#efb044"/><rect x="130" y="588" width="22" height="9" fill="#b8b8b8"/><rect x="130" y="597" width="22" height="10" rx="3" fill="#f68a7a"/></g>
<!-- flame -->
<path d="M80,628C82,640 92,640 92,650C92,658 86,662 79,662C72,662 67,658 67,650C67,644 72,640 73,636C75,640 77,640 78,640C80,636 81,632 80,628Z" fill="url(#fl)"/>
<path d="M79,646C84,650 85,658 79,661C74,659 74,651 79,646Z" fill="#fbd24a"/>
<!-- stamp -->
<rect x="134" y="628" width="12" height="13" rx="4" fill="#2a80c0"/><rect x="137" y="641" width="6" height="10" fill="#ccc"/>
<path d="M130,651H150L157,658H124Z" fill="#e0a878"/><rect x="124" y="659" width="33" height="3" fill="#d9604a"/>
<!-- circ brush -->
<path d="M66,695A16,16 0 0 1 90,690" fill="none" stroke="#8ab8e0" stroke-width="3"/>
<path d="M92,712A15,15 0 0 0 96,700" fill="none" stroke="#6a8aa0" stroke-width="2" stroke-dasharray="3 2"/>
<use href="#brush" transform="translate(76,707) scale(1.05)"/>
<!-- drop -->
<path d="M140,688C146,698 150,702 150,708A10,10 0 0 1 130,708C130,702 134,698 140,688Z" fill="url(#drop)"/>
<!-- bandage -->
<g transform="rotate(-45 79 760)"><rect x="56" y="749.5" width="46" height="21" rx="10.5" fill="#f09a60"/><rect x="70" y="749.5" width="18" height="21" fill="#f7c9ab"/></g>
<!-- pen -->
<path d="M124,776C128,764 132,754 139,748L153,760C146,768 136,772 124,776Z" fill="url(#nib)"/><circle cx="137" cy="763" r="2.5" fill="#222"/><path d="M124,776 136,764" stroke="#6a3a10" stroke-width="1"/>
<path d="M139,744 156,759" stroke="#eee" stroke-width="4"/><path d="M142,742 158,756" stroke="#222" stroke-width="2.5"/>
<path d="M145,741 158,745 156,752Z" fill="#6a2e16"/>
<!-- square -->
<rect x="66" y="804" width="28" height="28" fill="url(#sq)"/>
<!-- A -->
<text x="140" y="832" font-size="38" fill="#bdbdbd" text-anchor="middle" style='font-family:"Liberation Serif",serif'>A</text>
<!-- mesh -->
<path d="M67,860H92L97,892H63Z" fill="#2b3040" stroke="#8a8a90" stroke-width="1.5"/>
<path d="M75,860 72,892M84,860 87,892M79.500,860V892M66,870H93M64,881H96" stroke="#8a8a90" stroke-width="1" fill="none"/>
<!-- magnifier -->
<path d="M146,882 155,891" stroke="#d9953c" stroke-width="4" stroke-linecap="round"/>
<circle cx="137" cy="873" r="12.500" fill="url(#lens)" stroke="#e8eef4" stroke-width="3"/>
<!-- triangles -->
<g fill="#666">
<path d="M106,482V494H94Z"/><path d="M106,656V668H94Z"/><path d="M106,773V785H94Z"/><path d="M106,831V843H94Z"/><path d="M106,888V900H94Z"/>
<path d="M166,540V552H154Z"/><path d="M166,598V610H154Z"/><path d="M166,714V726H154Z"/><path d="M166,773V785H154Z"/><path d="M166,831V843H154Z"/>
</g>
<!-- swatches -->
<circle cx="98" cy="950" r="31" fill="#f41000" stroke="#4c4c4c" stroke-width="3"/>
<circle cx="98" cy="950" r="28.500" fill="none" stroke="#141414" stroke-width="1.5"/>
<circle cx="122" cy="976" r="32" fill="#3c3c3c" stroke="#555" stroke-width="2"/>
<circle cx="122" cy="976" r="29.500" fill="#0ff" stroke="#111" stroke-width="1.5"/>
<circle cx="79" cy="995" r="11" fill="#fff" stroke="#111" stroke-width="2"/>
<path d="M72,1002 86,988" stroke="#e0303c" stroke-width="2.5"/>
<path d="M132,926C142,926 150,934 148,943M131,926l7,-3M131,926l6,5M148,944l-5,-5M148,944l4,-5" fill="none" stroke="#ccc" stroke-width="2.5" stroke-linecap="round"/>

<!-- arrow -->
<g filter="url(#sh)">
<path d="M150,283 838,154" stroke="#f6c125" stroke-width="8"/>
<path d="M866,147 831,139 842,172Z" fill="#f6c125"/>
</g>
</svg>
<script>
document.querySelectorAll('path.s').forEach(function(e){
 var d=e.getAttribute('d'),cl=/Z\s*$/.test(d),n=d.match(/-?[\d.]+/g).map(Number),p=[],i;
 for(i=0;i+1<n.length;i+=2)p.push([n[i],n[i+1]]);
 var m=p.length;
 function g(k){return cl?p[(k+m*2)%m]:p[Math.max(0,Math.min(m-1,k))]}
 function tan(k){var a=g(k-1),b=g(k),c=g(k+1),ux=b[0]-a[0],uy=b[1]-a[1],vx=c[0]-b[0],vy=c[1]-b[1],lu=Math.hypot(ux,uy),lv=Math.hypot(vx,vy);
  if(!lu||!lv)return [0,0];
  if((ux*vx+uy*vy)/(lu*lv)<0.35)return [0,0];
  var tx=c[0]-a[0],ty=c[1]-a[1],l=Math.hypot(tx,ty)||1;return [tx/l,ty/l]}
 var o='M'+p[0][0]+','+p[0][1],c=cl?m:m-1;
 for(i=0;i<c;i++){var a=g(i),b=g(i+1),l=Math.hypot(b[0]-a[0],b[1]-a[1])*.35,ta=tan(i),tb=tan(i+1);
  o+=' C'+(a[0]+ta[0]*l).toFixed(1)+','+(a[1]+ta[1]*l).toFixed(1)+' '+(b[0]-tb[0]*l).toFixed(1)+','+(b[1]-tb[1]*l).toFixed(1)+' '+b[0]+','+b[1]}
 if(cl)o+='Z';
 e.setAttribute('d',o);
});
</script>
</body></html>
